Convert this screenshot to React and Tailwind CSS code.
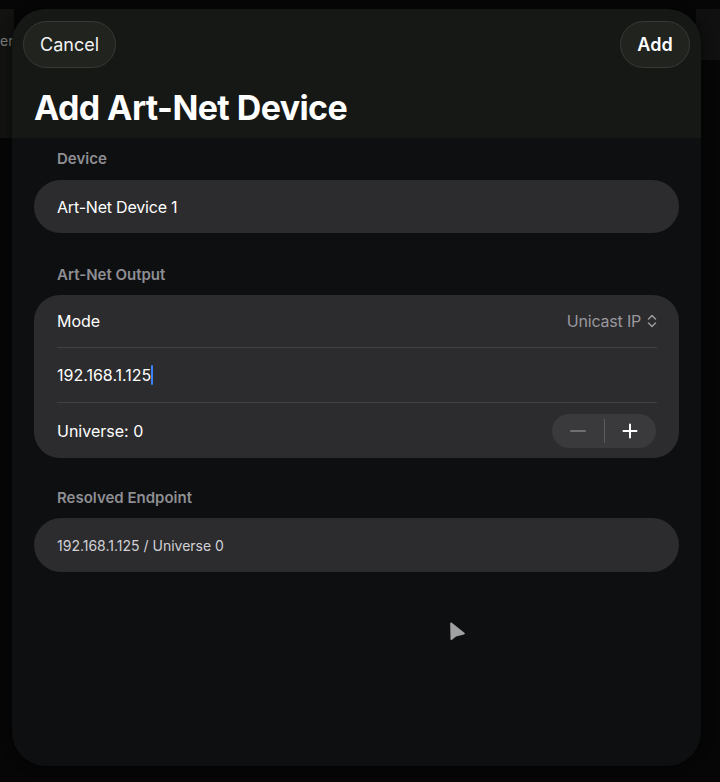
import React from 'react';

const ChevronUpDown = () => (
  <svg width="10" height="14" viewBox="0 0 10 14" fill="none" stroke="#98989d" strokeWidth="1.5" strokeLinecap="round" strokeLinejoin="round">
    <path d="M1.5 5 5 1.5 8.5 5" />
    <path d="M1.5 9 5 12.5 8.5 9" />
  </svg>
);

const Label = ({ children }) => (
  <div className="pl-[23px] text-[15px] leading-[20px] font-semibold text-[#8e8e93]">{children}</div>
);

export default function App() {
  return (
    <div className="relative w-[720px] h-[782px] bg-[#050605] overflow-hidden" style={{ fontFamily: 'Inter, "Noto Sans", sans-serif' }}>
      {/* page behind the sheet */}
      <div className="absolute left-0 top-[9px] w-[14px] h-[129px] bg-[#121311]">
        <span className="absolute left-0 top-[23px] text-[14px] leading-[18px] text-[#7d7e7b]">er</span>
      </div>
      <div className="absolute right-0 top-[9px] w-[24px] h-[51px] bg-[#0f100f]" />

      <div className="pt-[9px] pl-[12px] relative">
        <div className="w-[689px] h-[757px] rounded-[34px] bg-[#0e0f11] overflow-hidden shadow-[0_0_12px_rgba(0,0,0,0.6)]">
          {/* header */}
          <div className="h-[129px] bg-[#161815] px-[11px] pt-[12px]">
            <div className="flex items-center justify-between">
              <button className="h-[47px] w-[93px] rounded-full bg-[#21231f] border border-[#383a35] text-[18px] text-[#f2f2f2]">Cancel</button>
              <button className="h-[47px] w-[70px] rounded-full bg-[#21231f] border border-[#383a35] text-[18px] font-semibold text-white">Add</button>
            </div>
            <h1 className="pl-[11px] mt-[19px] text-[34px] leading-[41px] font-bold text-white tracking-[-0.6px]">Add Art-Net Device</h1>
          </div>

          {/* body */}
          <div className="px-[22px] pt-[11px]">
            <Label>Device</Label>
            <div className="mt-[11px] h-[53px] rounded-full bg-[#2c2c2e] flex items-center pl-[23px] text-[16px] tracking-[-0.2px] text-white">
              Art-Net Device 1
            </div>

            <div className="mt-[32px]">
              <Label>Art-Net Output</Label>
            </div>
            <div className="mt-[10px] rounded-[26px] bg-[#2c2c2e] pl-[23px] pr-[22px] text-[16px] text-white">
              <div className="h-[53px] flex items-center justify-between border-b border-[#414144]">
                <span>Mode</span>
                <span className="flex items-center gap-[6px] text-[#98989d] tracking-[-0.2px]">
                  Unicast IP
                  <ChevronUpDown />
                </span>
              </div>
              <div className="h-[55px] flex items-center border-b border-[#414144]">
                <span>192.168.1.125</span>
                <span className="w-[2px] h-[20px] bg-[#3b82f6] rounded-[1px]" />
              </div>
              <div className="h-[55px] flex items-center justify-between">
                <span>Universe: 0</span>
                <div className="mr-[1px] w-[104px] h-[34px] rounded-full bg-[#3a3a3c] flex items-center">
                  <div className="flex-1 flex items-center justify-center">
                    <svg width="16" height="2" viewBox="0 0 16 2"><rect width="16" height="2" rx="1" fill="#6e6e73" /></svg>
                  </div>
                  <div className="w-px h-[24px] bg-[#5c5c60]" />
                  <div className="flex-1 flex items-center justify-center">
                    <svg width="16" height="16" viewBox="0 0 16 16" stroke="#ffffff" strokeWidth="2" strokeLinecap="round">
                      <path d="M8 1.5v13M1.5 8h13" />
                    </svg>
                  </div>
                </div>
              </div>
            </div>

            <div className="mt-[30px]">
              <Label>Resolved Endpoint</Label>
            </div>
            <div className="mt-[10px] h-[54px] rounded-full bg-[#2c2c2e] flex items-center pl-[23px] text-[14px] text-[#d1d1d6]">
              192.168.1.125 / Universe 0
            </div>
          </div>
        </div>
      </div>

      {/* pointer */}
      <svg className="absolute left-[449px] top-[621px]" width="18" height="21" viewBox="0 0 18 21">
        <path d="M2.5 1.5 Q1 1 1.2 3 L1.5 18 Q1.6 19.8 3 18.8 L7 15.5 L15 13.6 Q16.6 13 15.4 11.8 Z" fill="#a1a1a3" />
      </svg>
    </div>
  );
}
